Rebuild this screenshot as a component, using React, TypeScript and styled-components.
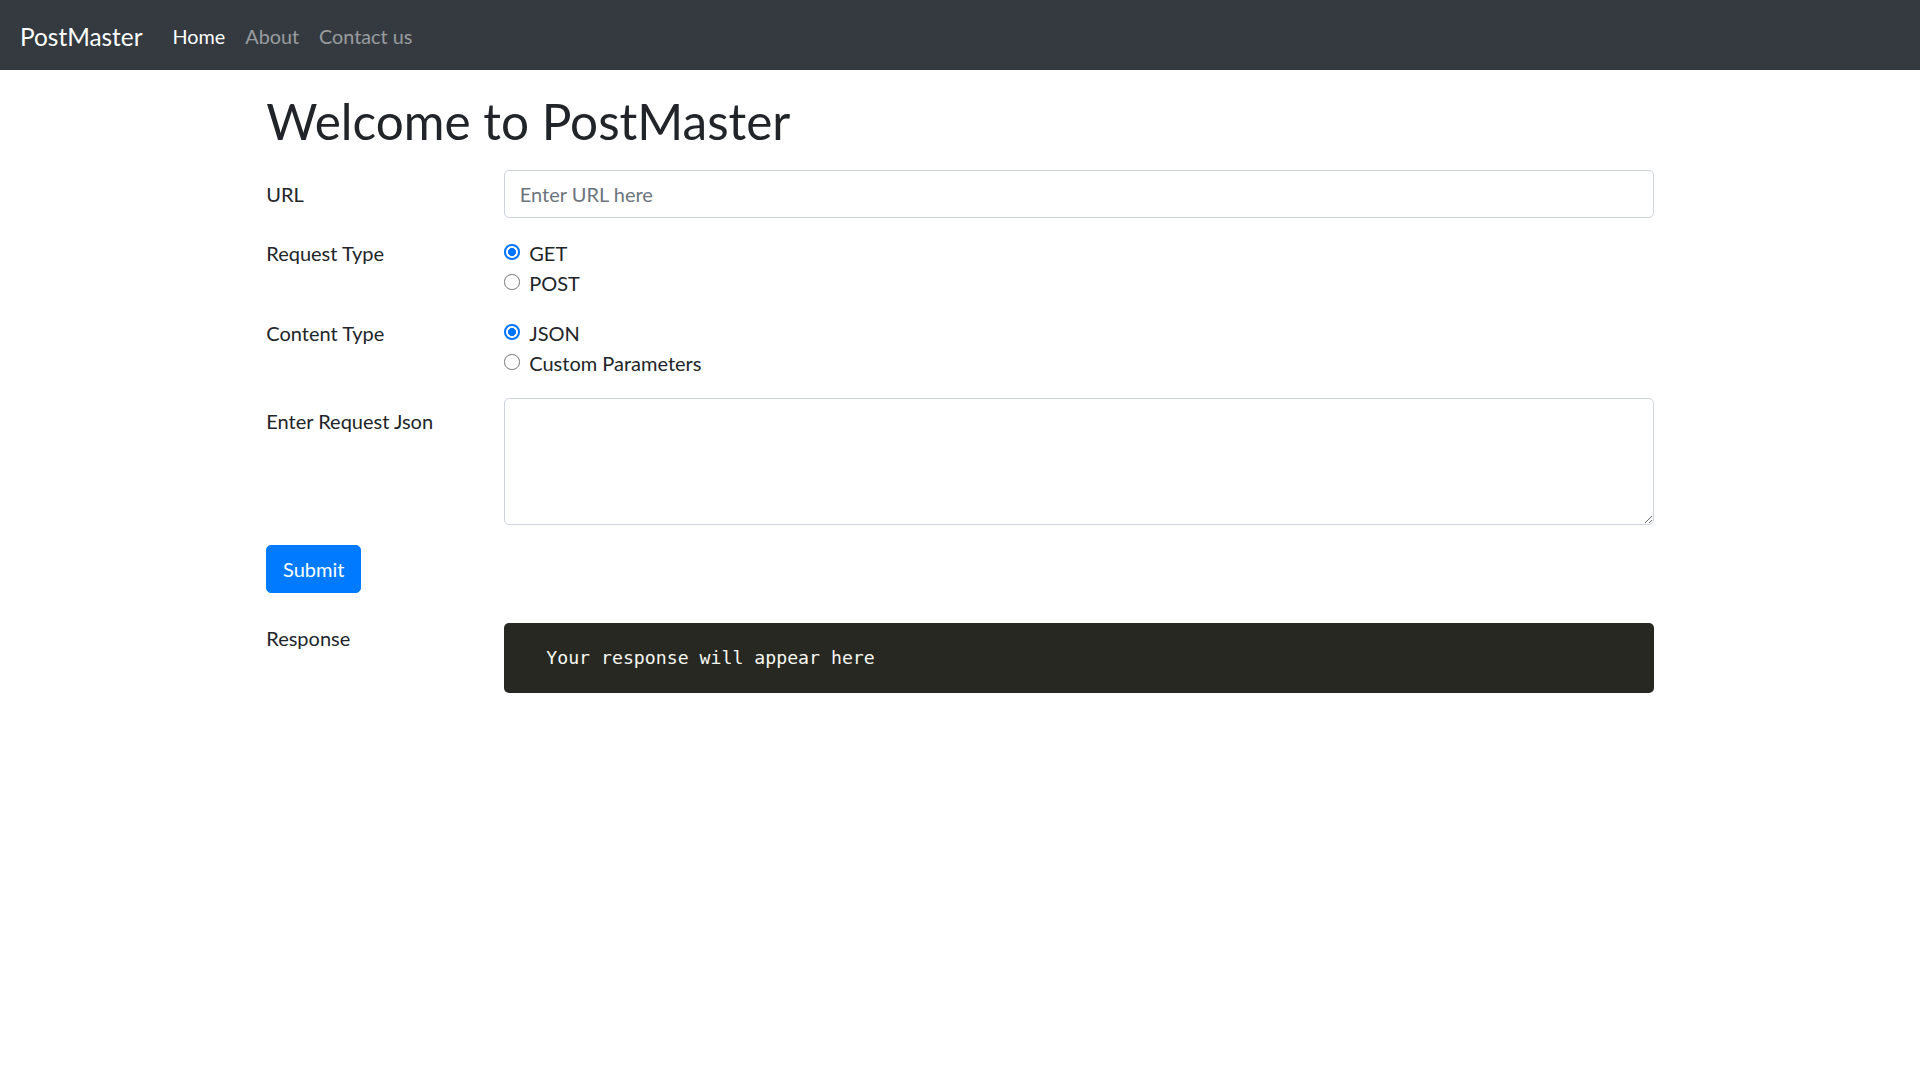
import React from "react";
import styled, { createGlobalStyle } from "styled-components";

const GlobalStyle = createGlobalStyle`
  html, body { margin: 0; padding: 0; background: #fff; }
  body {
    font-family: "Lato", "Open Sans", sans-serif;
    font-size: 20px;
    line-height: 1.5;
    color: #212529;
  }
  * { box-sizing: border-box; }
`;

const Navbar = styled.nav`
  height: 70px;
  background: #343a40;
  display: flex;
  align-items: center;
  padding: 4px 20px 0;
`;

const Brand = styled.a`
  font-size: 24.4px;
  line-height: 1.5;
  color: #fff;
  margin-right: 20px;
  text-decoration: none;
`;

const NavLink = styled.a<{ $active?: boolean }>`
  padding: 0 10px;
  font-size: 19.8px;
  color: ${(p) => (p.$active ? "#fff" : "rgba(255,255,255,0.5)")};
  text-decoration: none;
`;

const Container = styled.main`
  max-width: 1425px;
  margin: 0 auto;
  padding: 0 18.75px;
`;

const Title = styled.h1`
  font-size: 49.5px;
  font-weight: 400;
  line-height: 60px;
  margin: 21px 0 19px;
`;

const Row = styled.div`
  display: grid;
  grid-template-columns: 200px 1fr;
  column-gap: 37.5px;
  margin-bottom: 20px;
`;

const Label = styled.label<{ $pad?: boolean }>`
  line-height: 30px;
  padding: ${(p) => (p.$pad ? "8.75px 0" : "0")};
`;

const Input = styled.input`
  height: 47.5px;
  width: 100%;
  padding: 7.5px 15px;
  font: inherit;
  color: #495057;
  border: 1px solid #ced4da;
  border-radius: 5px;
  outline: none;
  &::placeholder { color: #6c757d; }
`;

const TextArea = styled.textarea`
  display: block;
  width: 100%;
  height: 127.5px;
  padding: 7.5px 15px;
  font: inherit;
  border: 1px solid #ced4da;
  border-radius: 5px;
  outline: none;
`;

const Options = styled.div`
  display: flex;
  flex-direction: column;
`;

const Option = styled.label`
  display: flex;
  align-items: center;
  height: 30px;
`;

const Radio = styled.input.attrs({ type: "radio" })`
  appearance: none;
  width: 15.5px;
  height: 15.5px;
  margin: -1px 9.5px 0 0.5px;
  border-radius: 50%;
  border: 1.5px solid #767676;
  background: #fff;
  flex: none;
  &:checked {
    border: 2px solid #0075ff;
    background: radial-gradient(circle, #0075ff 0 3.7px, #fff 4.3px);
  }
`;

const SubmitButton = styled.button`
  font: inherit;
  color: #fff;
  background: #007bff;
  border: 1px solid #007bff;
  border-radius: 5px;
  height: 47.5px;
  width: 95px;
  padding: 0;
  line-height: 30px;
  cursor: pointer;
`;

const Actions = styled.div`
  margin-bottom: 30px;
`;

const ResponseBox = styled.pre`
  margin: 0;
  background: #272822;
  color: #f8f8f2;
  border-radius: 5px;
  padding: 20px 42.5px 20px;
  font-family: "DejaVu Sans Mono", "Liberation Mono", monospace;
  font-size: 18.2px;
  line-height: 30px;
`;

export default function App() {
  return (
    <>
      <GlobalStyle />
      <Navbar>
        <Brand href="#">PostMaster</Brand>
        <NavLink $active href="#">Home</NavLink>
        <NavLink href="#">About</NavLink>
        <NavLink href="#">Contact us</NavLink>
      </Navbar>
      <Container>
        <Title>Welcome to PostMaster</Title>
        <Row>
          <Label $pad>URL</Label>
          <Input placeholder="Enter URL here" />
        </Row>
        <Row>
          <Label>Request Type</Label>
          <Options>
            <Option><Radio name="req" defaultChecked />GET</Option>
            <Option><Radio name="req" />POST</Option>
          </Options>
        </Row>
        <Row>
          <Label>Content Type</Label>
          <Options>
            <Option><Radio name="ct" defaultChecked />JSON</Option>
            <Option><Radio name="ct" />Custom Parameters</Option>
          </Options>
        </Row>
        <Row>
          <Label $pad>Enter Request Json</Label>
          <TextArea />
        </Row>
        <Actions>
          <SubmitButton>Submit</SubmitButton>
        </Actions>
        <Row>
          <Label>Response</Label>
          <ResponseBox>Your response will appear here</ResponseBox>
        </Row>
      </Container>
    </>
  );
}
